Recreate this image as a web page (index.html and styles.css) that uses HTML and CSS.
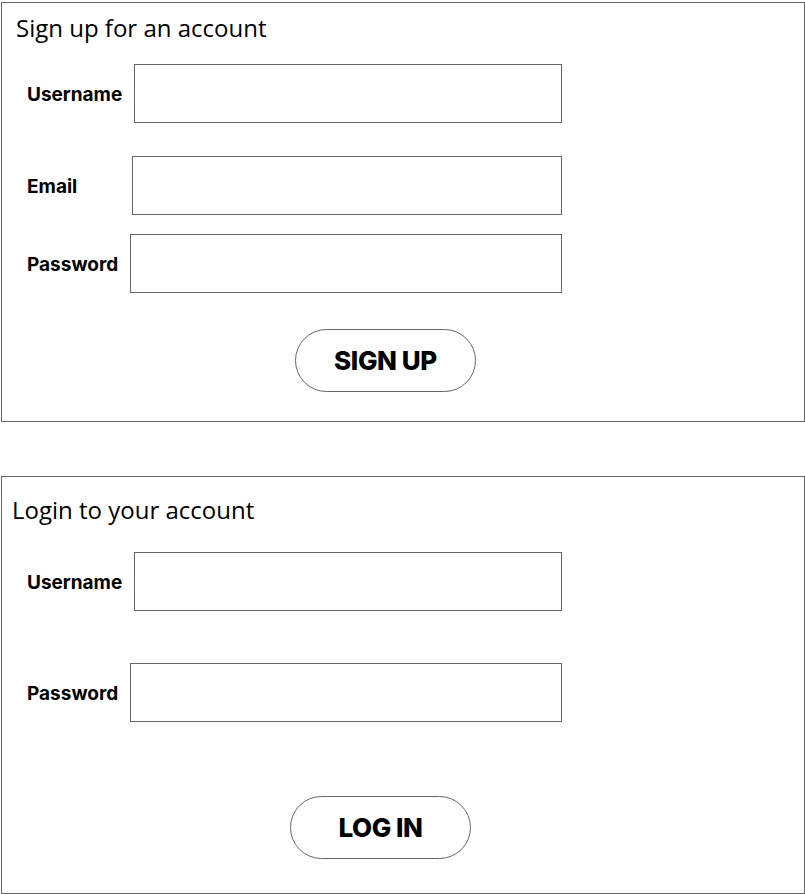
FILE: index.html
```html
<!DOCTYPE html>
<html>
<head>
<meta charset="utf-8">
<link rel="stylesheet" href="styles.css">
</head>
<body>
<section class="card card--signup">
  <h2 class="card__title card__title--signup">Sign up for an account</h2>
  <div class="row row--user">
    <label class="row__label">Username</label>
    <input class="row__input" type="text">
  </div>
  <div class="row row--email">
    <label class="row__label row__label--email">Email</label>
    <input class="row__input" type="email">
  </div>
  <div class="row row--pass">
    <label class="row__label">Password</label>
    <input class="row__input" type="password">
  </div>
  <div class="actions actions--signup">
    <button class="btn btn--signup">SIGN UP</button>
  </div>
</section>
<section class="card card--login">
  <h2 class="card__title card__title--login">Login to your account</h2>
  <div class="row row--luser">
    <label class="row__label">Username</label>
    <input class="row__input" type="text">
  </div>
  <div class="row row--lpass">
    <label class="row__label">Password</label>
    <input class="row__input" type="password">
  </div>
  <div class="actions actions--login">
    <button class="btn btn--login">LOG IN</button>
  </div>
</section>
</body>
</html>
```
FILE: styles.css
```css
* { box-sizing: border-box; }
body {
  margin: 2px 0 0 1px;
  width: 804px;
  background: #fff;
  color: #000;
}
.card {
  border: 1px solid #666;
  width: 804px;
}
.card--signup { height: 420px; }
.card--login { height: 418px; margin-top: 54px; }
.card__title {
  margin: 0;
  font-family: "Open Sans", sans-serif;
  font-weight: 400;
  font-size: 24px;
  line-height: 30px;
}
.card__title--signup { padding: 10px 0 0 14px; }
.card__title--login { padding: 18px 0 0 10px; }
.row {
  display: flex;
  align-items: center;
  width: 560px;
  padding-left: 25px;
}
.row__label {
  font-family: "Inter", sans-serif;
  font-weight: 700;
  font-size: 19px;
  margin-right: 12px;
  padding-top: 2px;
}
.row__label--email { width: 93px; margin-right: 12px; }
.row__input {
  flex: 1;
  height: 59px;
  border: 1px solid #666;
  margin: 0;
  padding: 0;
  background: #fff;
}
.row--user { margin-top: 21px; }
.row--email { margin-top: 33px; }
.row--pass { margin-top: 19px; }
.row--luser { margin-top: 27px; }
.row--lpass { margin-top: 52px; }
.actions { display: flex; padding-left: 293px; }
.actions--signup { margin-top: 36px; }
.actions--login { margin-top: 74px; padding-left: 288px; }
.btn {
  width: 181px;
  height: 63px;
  border: 1px solid #666;
  border-radius: 32px;
  background: #fff;
  font-family: "Inter", sans-serif;
  font-weight: 800;
  font-size: 26px;
  letter-spacing: -0.4px;
  color: #000;
  padding: 0;
}
```
